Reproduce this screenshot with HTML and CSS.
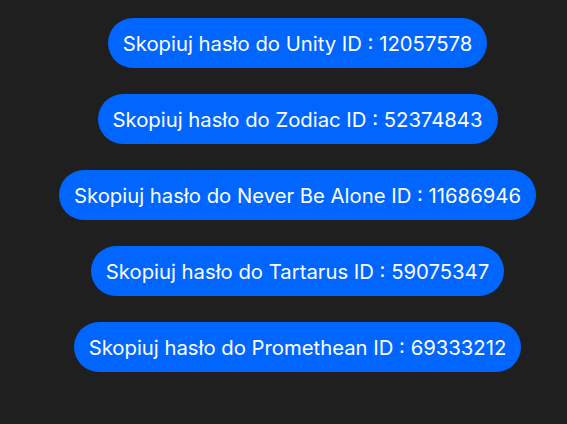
FILE: index.html
```html
<!DOCTYPE html>
<html lang="pl">
<head>
    <meta charset="UTF-8">
    <meta name="viewport" content="width=device-width, initial-scale=1.0">
    <title>Hasła</title>
    <link rel="stylesheet" href="styles.css">
</head>
<body>
    <div class="list">
        <button class="copy-btn">Skopiuj hasło do Unity ID : 12057578</button>
        <button class="copy-btn">Skopiuj hasło do Zodiac ID : 52374843</button>
        <button class="copy-btn">Skopiuj hasło do Never Be Alone ID : 11686946</button>
        <button class="copy-btn">Skopiuj hasło do Tartarus ID : 59075347</button>
        <button class="copy-btn">Skopiuj hasło do Promethean ID : 69333212</button>
    </div>
</body>
</html>
```

FILE: styles.css
```css
body {
    margin: 0;
    height: 100vh;
    background-color: #1f1f1f;
    font-family: Inter, "Noto Sans", sans-serif;
}
.list {
    display: flex;
    flex-direction: column;
    align-items: center;
    gap: 26px;
    padding: 18px 0 0 28px;
}
.copy-btn {
    height: 50px;
    padding: 0 15px;
    border: none;
    border-radius: 25px;
    background-color: #0066ff;
    color: white;
    font-family: inherit;
    font-size: 20.3px;
    cursor: pointer;
}
.copy-btn:hover {
    background-color: #0052cc;
}
```
